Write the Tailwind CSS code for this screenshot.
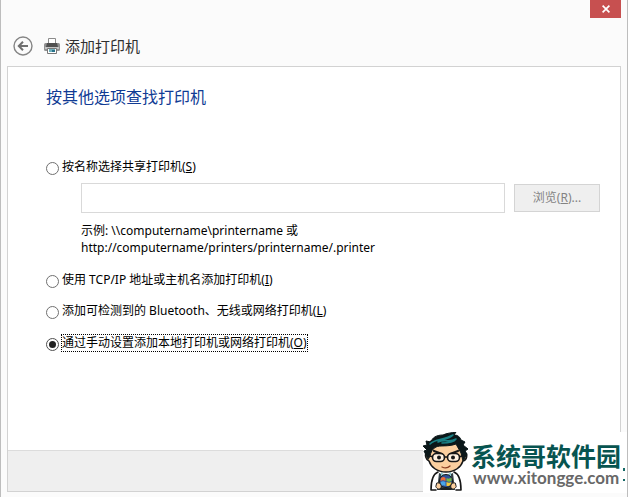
<!DOCTYPE html>
<html lang="zh-CN">
    <head>
        <meta charset="UTF-8">
        <meta name="viewport" content="width=device-width, initial-scale=1.0">
        <title>添加打印机</title>
        <script src="https://cdn.jsdelivr.net/npm/@tailwindcss/browser@4"></script>
    </head>
    <body class="bg-[#fbfbfb] text-black font-['Noto_Sans','Noto_Sans_CJK_SC',sans-serif]">
        <div class="relative min-h-screen flex flex-col border-x border-[#bdbdbd] px-1.5 pb-[5px]">
            <!-- Title bar -->
            <header>
                <div class="flex justify-end">
                    <button type="button" aria-label="关闭" class="w-[31px] h-[18px] bg-[#c75050] flex items-center justify-center">
                        <svg class="w-2 h-2" viewBox="0 0 8 8" fill="none" stroke="#fff" stroke-width="1.7">
                            <path d="M.6.6 7.4 7.4M7.4.6.6 7.4"/>
                        </svg>
                    </button>
                </div>
                <div class="flex items-center h-12 pt-2 pl-1.5">
                    <button type="button" aria-label="返回" class="w-5 h-5">
                        <svg class="w-5 h-5" viewBox="0 0 20 20" fill="none" stroke="#858585">
                            <circle cx="10" cy="10" r="9" stroke-width="1.4"/>
                            <path d="M15 10H6M10 5.8 5.8 10l4.2 4.2" stroke="#707070" stroke-width="2"/>
                        </svg>
                    </button>
                    <svg class="w-4 h-4 ml-[11px]" viewBox="0 0 16 16">
                        <path d="M4.500 6V.5h7V6" fill="#fff" stroke="#8b8b8b"/>
                        <rect x="0" y="5" width="16" height="8" rx="1.5" fill="#929292"/>
                        <path d="M3 5h10l1 4H2z" fill="#505050"/>
                        <rect x="1" y="9" width="14" height="2" fill="#c4c4c4"/>
                        <path d="M3.500 10.500h9v5h-9z" fill="#fff" stroke="#777"/>
                        <path d="M5 11h6v3H5z" fill="#6fb0bd"/>
                        <path d="M8 12h3v2H8z" fill="#28728a"/>
                    </svg>
                    <h1 class="ml-[5px] text-[15px] leading-5 text-[#303030]">添加打印机</h1>
                </div>
            </header>

            <form class="flex-1 flex flex-col bg-white border border-[#d2d2d2]">
                <main class="flex-1 pt-5 pl-[38px] pr-5 text-[12px]">
                    <h2 class="text-[16px] leading-5 text-[#103b94]">按其他选项查找打印机</h2>

                    <div class="flex items-center gap-[3px] h-5 mt-[50px]">
                        <input type="radio" name="way" id="shared" class="appearance-none w-[13px] h-[13px] mt-0.5 rounded-full border border-[#707070] bg-white">
                        <label for="shared" class="leading-4">按名称选择共享打印机(<u>S</u>)</label>
                    </div>
                    <div class="pl-[35px]">
                        <div class="flex items-center gap-[9px] mt-1.5">
                            <input type="text" aria-label="打印机名称" class="flex-1 min-w-0 h-[30px] border border-[#d9d9d9] bg-white px-2">
                            <button type="button" disabled class="w-[86px] h-7 border border-[#d4d4d4] bg-[#efefef] text-[#838383]">浏览(<u>R</u>)...</button>
                        </div>
                        <p class="mt-[9px] leading-[17px]">示例: \\computername\printername 或<br>http://computername/printers/printername/.printer</p>
                    </div>

                    <div class="flex items-center gap-[3px] h-5 mt-[14px]">
                        <input type="radio" name="way" id="tcp" class="appearance-none w-[13px] h-[13px] mt-0.5 rounded-full border border-[#707070] bg-white">
                        <label for="tcp" class="leading-4">使用 TCP/IP 地址或主机名添加打印机(<u>I</u>)</label>
                    </div>
                    <div class="flex items-center gap-[3px] h-5 mt-[11px]">
                        <input type="radio" name="way" id="wireless" class="appearance-none w-[13px] h-[13px] mt-0.5 rounded-full border border-[#707070] bg-white">
                        <label for="wireless" class="leading-4">添加可检测到的 Bluetooth、无线或网络打印机(<u>L</u>)</label>
                    </div>
                    <div class="flex items-center gap-[3px] h-5 mt-3">
                        <input type="radio" name="way" id="manual" checked class="appearance-none w-[13px] h-[13px] mt-0.5 rounded-full border border-[#505050] bg-[#222] bg-clip-content p-0.5">
                        <label for="manual" class="leading-4 outline-1 outline-dotted outline-black">通过手动设置添加本地打印机或网络打印机(<u>O</u>)</label>
                    </div>
                </main>
                <footer class="h-[41px] bg-[#efefef] border-t border-[#dcdcdc]"></footer>
            </form>

            <!-- Site badge, lies over the dialog corner -->
            <div class="absolute right-0 bottom-1 w-[204px] h-[61px] bg-white flex">
                <svg class="w-[46px] h-[61px] shrink-0" viewBox="0 0 46 61" stroke-linejoin="round" stroke-linecap="round">
                    <path d="M15 40c-5 2-7 8-7 18h30c0-10-2-16-7-18z" fill="#fff"/>
                    <path d="M15 40c-5 2-7 8-7 18h5M31 40c5 2 7 8 7 18h-5" fill="none" stroke="#171717" stroke-width="1.6"/>
                    <path d="m16 41 7 3 7-3 2 17H14z" fill="#344148"/>
                    <path d="m18 40 5 4 5-4v4H18z" fill="#8cc8d0"/>
                    <path d="M4 21c-3 1-1 7 2 8 2 6 8 11 17 11s15-5 17-11c4-1 5-7 2-8L38 9H8z" fill="#fbcf9f" stroke="#171717" stroke-width="1.5"/>
                    <path d="M5 27 1 19l3-1-4-4 4-1-1-4 5 1c1-4 5-7 12-7 4-2 8-2 13-3l-2 3c4 0 6 2 7 5l4 2-2 3 5 4-3 2 2 3-4 7-2-8-5-9c-8 3-16 1-20 3-4 2-5 5-6 9z" fill="#0b1719" stroke="#0b1719"/>
                    <path d="M7 12c5-5 14-4 23-9-5 5-11 4-15 7 7-3 12 1 18-3-3 4-9 4-14 4" fill="none" stroke="#197f84" stroke-width="1.6"/>
                    <path d="m11 19 8 3m8 0 8-3" stroke="#171717" stroke-width="2.2"/>
                    <rect x="9.500" y="21.500" width="12" height="8" rx="4" fill="#fff1e0" stroke="#171717" stroke-width="1.6"/>
                    <rect x="24.500" y="21.500" width="12" height="8" rx="4" fill="#fff1e0" stroke="#171717" stroke-width="1.6"/>
                    <path d="M21.500 25h3M6 24l3 .5m28 0 3-.5" stroke="#171717" stroke-width="1.5"/>
                    <circle cx="16" cy="25.500" r="2" fill="#171717"/>
                    <circle cx="30" cy="25.500" r="2" fill="#171717"/>
                    <path d="M19 35c3 1.500 6 1 8-1" fill="none" stroke="#8a3d22" stroke-width="1.3"/>
                    <circle cx="23" cy="49" r="6.500" fill="#31529a" stroke="#171717"/>
                    <path d="M18 46c2-1.500 3-1 4.500 0v3c-2-1-3-1-5 0z" fill="#ee6b35"/>
                    <path d="M23.500 46c2 1 3 1 5-.5v3.500c-2 1-3 1-5 0z" fill="#75bb43"/>
                    <path d="M17.500 50c2-1 3-1 5 0v4c-2-1-3-1-4 0z" fill="#4aa4e8"/>
                    <path d="M23.500 50c2 1 3 1 5 0l-1 3c-1 1-3 1-4 1z" fill="#f5c83a"/>
                    <path d="M14 51c3-1 5 2 4 5-2 2-4 1-5-1zm18 0c-3-1-5 2-4 5 2 2 4 1 5-1z" fill="#fbcf9f" stroke="#171717"/>
                    <path d="M18 57h10" stroke="#171717" stroke-width="1.5"/>
                </svg>
                <div class="pt-3 pl-0.5">
                    <p class="text-[25px] leading-6 font-bold text-[#075450] whitespace-nowrap">系统哥软件园</p>
                    <p class="pl-0.5 text-[17px] leading-5 font-bold text-[#686868] font-['Lato',sans-serif] whitespace-nowrap">www.xitongge.com</p>
                </div>
                <svg class="w-1 h-4 mt-[34px] ml-0.5 shrink-0" viewBox="0 0 4 16" fill="#176b68">
                    <path d="M0 2h2v3H0zM0 13h2v2H0z"/>
                </svg>
            </div>
        </div>
    </body>
</html>
